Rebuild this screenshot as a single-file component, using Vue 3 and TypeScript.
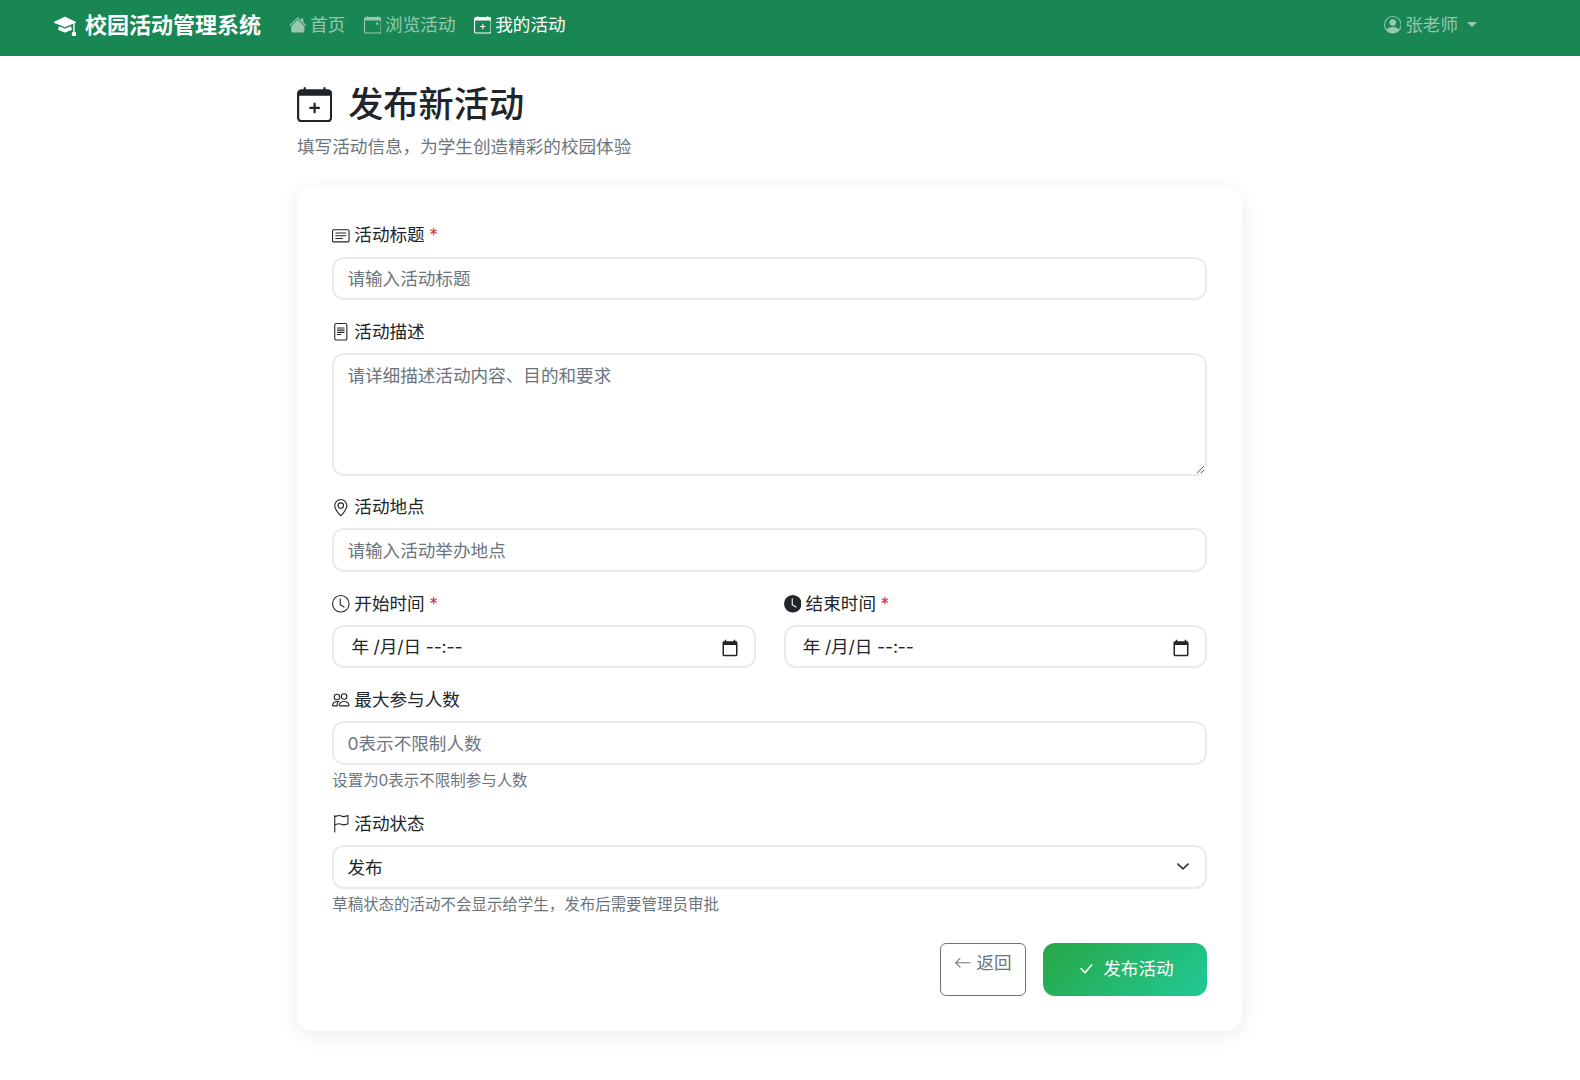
<script setup lang="ts">
const calendarFrame =
  'M3.5 0a.5.5 0 0 1 .5.5V1h8V.5a.5.5 0 0 1 1 0V1h1a2 2 0 0 1 2 2v11a2 2 0 0 1-2 2H2a2 2 0 0 1-2-2V3a2 2 0 0 1 2-2h1V.5a.5.5 0 0 1 .5-.5zM1 4v10a1 1 0 0 0 1 1h12a1 1 0 0 0 1-1V4H1z'
const plus =
  'M8 7a.5.5 0 0 1 .5.5V9H10a.5.5 0 0 1 0 1H8.5v1.5a.5.5 0 0 1-1 0V10H6a.5.5 0 0 1 0-1h1.5V7.5A.5.5 0 0 1 8 7z'
const picker =
  'M20 3h-1V1h-2v2H7V1H5v2H4c-1.1 0-2 .9-2 2v16c0 1.1.9 2 2 2h16c1.1 0 2-.9 2-2V5c0-1.1-.9-2-2-2zm0 18H4V8h16v13z'
</script>

<template>
  <div class="page">
    <nav class="navbar">
      <a class="brand">
        <svg class="brand-icon" viewBox="0 0 16 16" fill="currentColor">
          <path d="M8.211 2.047a.5.5 0 0 0-.422 0l-7.5 3.5a.5.5 0 0 0 .025.917l7.5 3a.5.5 0 0 0 .372 0L14 7.14V13a1 1 0 0 0-1 1v2h3v-2a1 1 0 0 0-1-1V6.739l.686-.275a.5.5 0 0 0 .025-.917l-7.5-3.5Z" />
          <path d="M4.176 9.032a.5.5 0 0 0-.656.327l-.5 1.7a.5.5 0 0 0 .294.605l4.5 1.8a.5.5 0 0 0 .372 0l4.5-1.8a.5.5 0 0 0 .294-.605l-.5-1.7a.5.5 0 0 0-.656-.327L8 10.466 4.176 9.032Z" />
        </svg>
        <span>校园活动管理系统</span>
      </a>
      <div class="nav-links">
        <a class="nav-link">
          <svg class="icon" viewBox="0 0 16 16" fill="currentColor">
            <path d="M8.707 1.5a1 1 0 0 0-1.414 0L.646 8.146a.5.5 0 0 0 .708.708L8 2.207l6.646 6.647a.5.5 0 0 0 .708-.708L13 5.793V2.5a.5.5 0 0 0-.5-.5h-1a.5.5 0 0 0-.5.5v1.293L8.707 1.5Z" />
            <path d="m8 3.293 6 6V13.5a1.5 1.5 0 0 1-1.5 1.5h-9A1.5 1.5 0 0 1 2 13.5V9.293l6-6Z" />
          </svg>
          <span>首页</span>
        </a>
        <a class="nav-link">
          <svg class="icon" viewBox="0 0 16 16" fill="currentColor">
            <path d="M11 6.5a.5.5 0 0 1 .5-.5h1a.5.5 0 0 1 .5.5v1a.5.5 0 0 1-.5.5h-1a.5.5 0 0 1-.5-.5v-1z" />
            <path :d="calendarFrame" />
          </svg>
          <span>浏览活动</span>
        </a>
        <a class="nav-link active">
          <svg class="icon" viewBox="0 0 16 16" fill="currentColor">
            <path :d="plus" />
            <path :d="calendarFrame" />
          </svg>
          <span>我的活动</span>
        </a>
      </div>
      <a class="nav-link user">
        <svg class="icon" viewBox="0 0 16 16" fill="currentColor">
          <path d="M11 6a3 3 0 1 1-6 0 3 3 0 0 1 6 0z" />
          <path fill-rule="evenodd" d="M0 8a8 8 0 1 1 16 0A8 8 0 0 1 0 8zm8-7a7 7 0 0 0-5.468 11.37C3.242 11.226 4.805 10 8 10s4.757 1.225 5.468 2.37A7 7 0 0 0 8 1z" />
        </svg>
        <span>张老师</span>
        <i class="caret"></i>
      </a>
    </nav>

    <main class="main">
      <header class="head">
        <h1 class="title">
          <svg class="title-icon" viewBox="0 0 16 16" fill="currentColor">
            <path :d="plus" />
            <path :d="calendarFrame" />
          </svg>
          <span>发布新活动</span>
        </h1>
        <p class="subtitle">填写活动信息，为学生创造精彩的校园体验</p>
      </header>

      <form class="card" @submit.prevent>
        <div class="field">
          <label class="label">
            <svg class="icon" viewBox="0 0 16 16" fill="currentColor">
              <path d="M14.5 3a.5.5 0 0 1 .5.5v9a.5.5 0 0 1-.5.5h-13a.5.5 0 0 1-.5-.5v-9a.5.5 0 0 1 .5-.5h13zm-13-1A1.5 1.5 0 0 0 0 3.5v9A1.5 1.5 0 0 0 1.5 14h13a1.5 1.5 0 0 0 1.5-1.5v-9A1.5 1.5 0 0 0 14.5 2h-13z" />
              <path d="M3 5.5a.5.5 0 0 1 .5-.5h9a.5.5 0 0 1 0 1h-9a.5.5 0 0 1-.5-.5zM3 8a.5.5 0 0 1 .5-.5h9a.5.5 0 0 1 0 1h-9A.5.5 0 0 1 3 8zm0 2.5a.5.5 0 0 1 .5-.5h6a.5.5 0 0 1 0 1h-6a.5.5 0 0 1-.5-.5z" />
            </svg>
            <span>活动标题</span>
            <b class="req">*</b>
          </label>
          <input class="control" type="text" placeholder="请输入活动标题" />
        </div>

        <div class="field">
          <label class="label">
            <svg class="icon" viewBox="0 0 16 16" fill="currentColor">
              <path d="M5 4a.5.5 0 0 0 0 1h6a.5.5 0 0 0 0-1H5zm-.5 2.5A.5.5 0 0 1 5 6h6a.5.5 0 0 1 0 1H5a.5.5 0 0 1-.5-.5zM5 8a.5.5 0 0 0 0 1h6a.5.5 0 0 0 0-1H5zm0 2a.5.5 0 0 0 0 1h3a.5.5 0 0 0 0-1H5z" />
              <path d="M2 2a2 2 0 0 1 2-2h8a2 2 0 0 1 2 2v12a2 2 0 0 1-2 2H4a2 2 0 0 1-2-2V2zm10-1H4a1 1 0 0 0-1 1v12a1 1 0 0 0 1 1h8a1 1 0 0 0 1-1V2a1 1 0 0 0-1-1z" />
            </svg>
            <span>活动描述</span>
          </label>
          <textarea class="control area" rows="4" placeholder="请详细描述活动内容、目的和要求"></textarea>
        </div>

        <div class="field">
          <label class="label">
            <svg class="icon" viewBox="0 0 16 16" fill="currentColor">
              <path d="M12.166 8.94c-.524 1.062-1.234 2.12-1.96 3.07A31.493 31.493 0 0 1 8 14.58a31.481 31.481 0 0 1-2.206-2.57c-.726-.95-1.436-2.008-1.96-3.07C3.304 7.867 3 6.862 3 6a5 5 0 0 1 10 0c0 .862-.305 1.867-.834 2.94zM8 16s6-5.686 6-10A6 6 0 0 0 2 6c0 4.314 6 10 6 10z" />
              <path d="M8 8a2 2 0 1 1 0-4 2 2 0 0 1 0 4zm0 1a3 3 0 1 0 0-6 3 3 0 0 0 0 6z" />
            </svg>
            <span>活动地点</span>
          </label>
          <input class="control" type="text" placeholder="请输入活动举办地点" />
        </div>

        <div class="two">
          <div class="field">
            <label class="label">
              <svg class="icon" viewBox="0 0 16 16" fill="currentColor">
                <path d="M8 3.5a.5.5 0 0 0-1 0V9a.5.5 0 0 0 .252.434l3.5 2a.5.5 0 0 0 .496-.868L8 8.71V3.5z" />
                <path d="M8 16A8 8 0 1 0 8 0a8 8 0 0 0 0 16zm7-8A7 7 0 1 1 1 8a7 7 0 0 1 14 0z" />
              </svg>
              <span>开始时间</span>
              <b class="req">*</b>
            </label>
            <div class="control date">
              <span>年 /月/日 --:--</span>
              <svg class="picker" viewBox="0 0 24 24" fill="currentColor"><path :d="picker" /></svg>
            </div>
          </div>
          <div class="field">
            <label class="label">
              <svg class="icon" viewBox="0 0 16 16" fill="currentColor">
                <path d="M16 8A8 8 0 1 1 0 8a8 8 0 0 1 16 0zM8 3.5a.5.5 0 0 0-1 0V9a.5.5 0 0 0 .252.434l3.5 2a.5.5 0 0 0 .496-.868L8 8.71V3.5z" />
              </svg>
              <span>结束时间</span>
              <b class="req">*</b>
            </label>
            <div class="control date">
              <span>年 /月/日 --:--</span>
              <svg class="picker" viewBox="0 0 24 24" fill="currentColor"><path :d="picker" /></svg>
            </div>
          </div>
        </div>

        <div class="field">
          <label class="label">
            <svg class="icon" viewBox="0 0 16 16" fill="currentColor">
              <path d="M15 14s1 0 1-1-1-4-5-4-5 3-5 4 1 1 1 1h8Zm-7.978-1A.261.261 0 0 1 7 12.996c.001-.264.167-1.03.76-1.72C8.312 10.629 9.282 10 11 10c1.717 0 2.687.63 3.24 1.276.593.69.758 1.457.76 1.72l-.008.002a.274.274 0 0 1-.014.002H7.022ZM11 7a2 2 0 1 0 0-4 2 2 0 0 0 0 4Zm3-2a3 3 0 1 1-6 0 3 3 0 0 1 6 0ZM6.936 9.28a5.88 5.88 0 0 0-1.23-.247A7.35 7.35 0 0 0 5 9c-4 0-5 3-5 4 0 .667.333 1 1 1h4.216A2.238 2.238 0 0 1 5 13c0-1.01.377-2.042 1.09-2.904.243-.294.526-.569.846-.816ZM4.92 10A5.493 5.493 0 0 0 4 13H1c0-.26.164-1.03.76-1.724.545-.636 1.492-1.256 3.16-1.275ZM1.5 5.5a3 3 0 1 1 6 0 3 3 0 0 1-6 0Zm3-2a2 2 0 1 0 0 4 2 2 0 0 0 0-4Z" />
            </svg>
            <span>最大参与人数</span>
          </label>
          <input class="control" type="text" placeholder="0表示不限制人数" />
          <div class="help">设置为0表示不限制参与人数</div>
        </div>

        <div class="field">
          <label class="label">
            <svg class="icon" viewBox="0 0 16 16" fill="currentColor">
              <path d="M14.778.085A.5.5 0 0 1 15 .5V8a.5.5 0 0 1-.314.464L14.5 8l.186.464-.003.001-.006.003-.023.009a12.435 12.435 0 0 1-.397.15c-.264.095-.631.223-1.047.35-.816.252-1.879.523-2.71.523-.847 0-1.548-.28-2.158-.525l-.028-.01C7.68 8.71 7.14 8.5 6.5 8.5c-.7 0-1.638.23-2.437.477A19.626 19.626 0 0 0 3 9.342V15.5a.5.5 0 0 1-1 0V.5a.5.5 0 0 1 1 0v.282c.226-.079.496-.17.79-.26C4.606.272 5.67 0 6.5 0c.84 0 1.524.277 2.121.519l.043.018C9.286.788 9.828 1 10.5 1c.7 0 1.638-.23 2.437-.477a19.587 19.587 0 0 0 1.349-.476l.019-.007.004-.002h.001M14 1.221c-.22.078-.48.167-.766.255-.81.252-1.872.523-2.734.523-.886 0-1.592-.286-2.203-.534l-.008-.003C7.662 1.21 7.139 1 6.5 1c-.669 0-1.606.229-2.415.478A21.294 21.294 0 0 0 3 1.845v6.433c.22-.078.48-.167.766-.255C4.576 7.77 5.638 7.5 6.5 7.5c.847 0 1.548.28 2.158.525l.028.01C9.32 8.29 9.86 8.5 10.5 8.5c.668 0 1.606-.229 2.415-.478A21.317 21.317 0 0 0 14 7.655V1.222z" />
            </svg>
            <span>活动状态</span>
          </label>
          <select class="control select">
            <option>发布</option>
            <option>草稿</option>
          </select>
          <div class="help">草稿状态的活动不会显示给学生，发布后需要管理员审批</div>
        </div>

        <div class="actions">
          <button class="btn back" type="button">
            <svg class="icon" viewBox="0 0 16 16" fill="currentColor">
              <path fill-rule="evenodd" d="M15 8a.5.5 0 0 0-.5-.5H2.707l3.147-3.146a.5.5 0 1 0-.708-.708l-4 4a.5.5 0 0 0 0 .708l4 4a.5.5 0 0 0 .708-.708L2.707 8.5H14.5A.5.5 0 0 0 15 8z" />
            </svg>
            <span>返回</span>
          </button>
          <button class="btn submit" type="submit">
            <svg class="icon" viewBox="0 0 16 16" fill="currentColor">
              <path d="M12.736 3.97a.733.733 0 0 1 1.047 0c.286.289.29.756.01 1.05L7.88 12.01a.733.733 0 0 1-1.065.02L3.217 8.384a.735.735 0 0 1 0-1.06.733.733 0 0 1 1.047 0l3.052 3.093 5.42-6.425a.237.237 0 0 1 .02-.022z" />
            </svg>
            <span>发布活动</span>
          </button>
        </div>
      </form>
    </main>
  </div>
</template>

<style>
html,
body {
  margin: 0;
  background: #fff;
}
</style>

<style scoped>
.page {
  font-family: Inter, "Noto Sans CJK SC", sans-serif;
  font-size: 17.6px;
  line-height: 1.5;
  color: #212529;
  min-height: 1080px;
}
.navbar {
  display: flex;
  align-items: center;
  box-sizing: border-box;
  height: 56px;
  padding: 0 103px 6px 54px;
  background: #198754;
}
.brand {
  display: flex;
  align-items: center;
  gap: 9px;
  color: #fff;
  font-size: 22px;
  font-weight: 700;
  margin-right: 27.5px;
}
.brand-icon {
  width: 22px;
  height: 22px;
}
.nav-links {
  display: flex;
  gap: 18.2px;
}
.nav-link {
  display: flex;
  align-items: center;
  gap: 4px;
  color: rgba(255, 255, 255, 0.55);
}
.nav-link.active {
  color: #fff;
}
.user {
  margin-left: auto;
}
.caret {
  width: 0;
  height: 0;
  margin-left: 5px;
  border-top: 5.3px solid currentColor;
  border-left: 5.3px solid transparent;
  border-right: 5.3px solid transparent;
}
.icon {
  width: 17.6px;
  height: 17.6px;
  flex: none;
}
.main {
  box-sizing: border-box;
  width: 945px;
  margin-left: 297px;
  padding: 27.4px 0 48px;
}
.head {
  margin-bottom: 25.4px;
}
.title {
  display: flex;
  align-items: center;
  gap: 16px;
  margin: 0 0 8.8px;
  font-size: 35.2px;
  font-weight: 500;
  line-height: 1.2;
}
.title-icon {
  width: 35.2px;
  height: 35.2px;
  flex: none;
}
.subtitle {
  margin: 0;
  color: #6c757d;
}
.card {
  padding: 35.2px;
  background: #fff;
  border-radius: 16px;
  box-shadow: 0 4px 20px rgba(0, 0, 0, 0.08);
}
.field {
  margin-bottom: 17.6px;
  min-width: 0;
}
.label {
  display: flex;
  align-items: center;
  gap: 4.5px;
  margin-bottom: 7.8px;
  padding-top: 1px;
  font-weight: 400;
}
.req {
  color: #dc3545;
  font-weight: 400;
}
.control {
  display: block;
  box-sizing: border-box;
  width: 100%;
  padding: 7.6px 13.2px 5.6px;
  border: 2px solid #e9ecef;
  border-radius: 12px;
  background: #fff;
  color: #212529;
  font: inherit;
  line-height: 1.5;
  outline: none;
}
.control::placeholder {
  color: #6c757d;
  opacity: 1;
}
.area {
  resize: vertical;
  margin-bottom: 2.3px;
}
.two {
  display: grid;
  grid-template-columns: 1fr 1fr;
  gap: 28px;
}
.date {
  display: flex;
  align-items: center;
  justify-content: space-between;
  padding: 7.6px 14.6px 5.6px 17.2px;
  letter-spacing: -0.15px;
}
.picker {
  width: 18px;
  height: 18px;
}
.select {
  appearance: none;
  padding-right: 40px;
  background-image: url("data:image/svg+xml,%3csvg xmlns='http://www.w3.org/2000/svg' viewBox='0 0 16 16'%3e%3cpath fill='none' stroke='%23343a40' stroke-linecap='round' stroke-linejoin='round' stroke-width='2' d='m2 5 6 6 6-6'/%3e%3c/svg%3e");
  background-repeat: no-repeat;
  background-position: right 13.2px center;
  background-size: 17.6px 13.2px;
}
.help {
  margin-top: 4.4px;
  font-size: 15.48px;
  color: #6c757d;
}
.actions {
  display: flex;
  justify-content: flex-end;
  gap: 17.6px;
  margin-top: 26.4px;
}
.btn {
  display: block;
  font: inherit;
  line-height: 1.5;
  cursor: pointer;
}
.btn .icon {
  display: inline-block;
  vertical-align: -2.5px;
  margin-right: 5px;
}
.back {
  padding: 6.6px 13.2px;
  border: 1px solid #6c757d;
  border-radius: 6px;
  background: #fff;
  color: #6c757d;
  align-self: stretch;
  display: flex;
  align-items: flex-start;
}
.back .icon {
  margin-top: 4px;
}
.submit {
  padding: 13.5px 33.2px;
  border: 0;
  border-radius: 12px;
  background: linear-gradient(135deg, #28a745, #20c997);
  color: #fff;
  font-weight: 400;
}
.submit .icon {
  margin-right: 9px;
}
</style>
